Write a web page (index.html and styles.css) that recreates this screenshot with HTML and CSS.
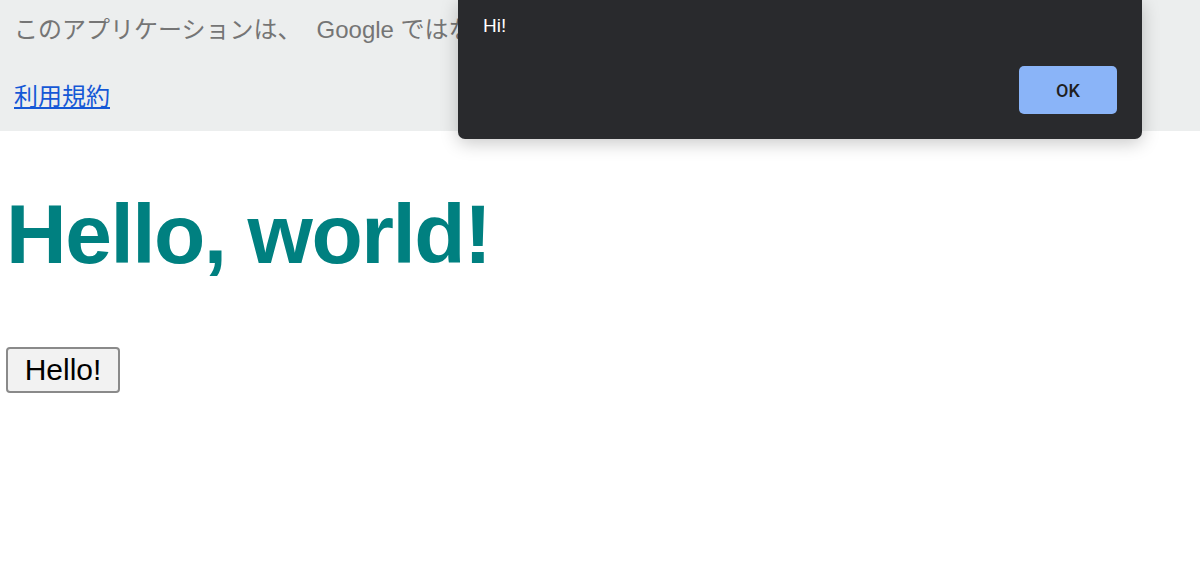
FILE: index.html
```html
<!DOCTYPE html>
<html lang="ja">
<head>
<meta charset="utf-8">
<title>Hello</title>
<link rel="stylesheet" href="styles.css">
</head>
<body>
<div class="banner">
  <div class="banner-text">このアプリケーションは、<span class="brand">Google</span> ではなく、別のユーザーによって作成されました。</div>
  <a class="banner-link" href="#">利用規約</a>
</div>
<main class="content">
  <h1 class="title">Hello, world!</h1>
  <button class="hello-btn" type="button">Hello!</button>
</main>
<div class="dialog">
  <div class="dialog-msg">Hi!</div>
  <div class="dialog-actions">
    <button class="ok-btn" type="button">OK</button>
  </div>
</div>
</body>
</html>
```
FILE: styles.css
```css
html, body {
  margin: 0;
  padding: 0;
  background: #ffffff;
}
body {
  font-family: "Liberation Sans", "Noto Sans CJK JP", sans-serif;
  position: relative;
  min-height: 575px;
  overflow: hidden;
}
.banner {
  background: #eceeee;
  height: 131px;
  box-sizing: border-box;
  padding: 12px 15px 0 14px;
  display: flex;
  flex-direction: column;
  align-items: flex-start;
  gap: 31px;
}
.banner-text {
  font-size: 24px;
  line-height: 36px;
  color: #757575;
  white-space: nowrap;
  max-width: 444px;
  overflow: hidden;
}
.brand {
  margin-left: 15px;
}
.banner-link {
  font-size: 24px;
  line-height: 36px;
  color: #1558d6;
  text-decoration: underline;
  text-underline-offset: 2px;
}
.content {
  padding: 0 6px;
}
.title {
  margin: 61px 0 0 0;
  font-size: 84px;
  line-height: 84px;
  font-weight: bold;
  color: #008080;
  letter-spacing: -1.5px;
}
.hello-btn {
  margin-top: 71px;
  width: 114px;
  height: 46px;
  font-family: "Liberation Sans", sans-serif;
  font-size: 30px;
  color: #000;
  background: #f2f2f2;
  border: 2px solid #8a8a8a;
  border-radius: 4px;
  padding: 0;
}
.dialog {
  position: absolute;
  top: 0;
  left: 458px;
  width: 684px;
  height: 139px;
  box-sizing: border-box;
  background: #292a2d;
  border-radius: 0 0 7px 7px;
  box-shadow: 0 4px 18px rgba(0, 0, 0, 0.22);
  padding: 14px 25px 25px 25px;
  display: flex;
  flex-direction: column;
  justify-content: space-between;
}
.dialog-msg {
  color: #ffffff;
  font-family: "Liberation Sans", sans-serif;
  font-size: 19px;
  line-height: 24px;
}
.dialog-actions {
  display: flex;
  justify-content: flex-end;
}
.ok-btn {
  width: 98px;
  height: 48px;
  background: #8ab4f8;
  color: #1f1f1f;
  border: none;
  border-radius: 5px;
  font-family: "Roboto", "Liberation Sans", sans-serif;
  font-weight: 500;
  font-size: 18px;
  padding: 0;
}
```
